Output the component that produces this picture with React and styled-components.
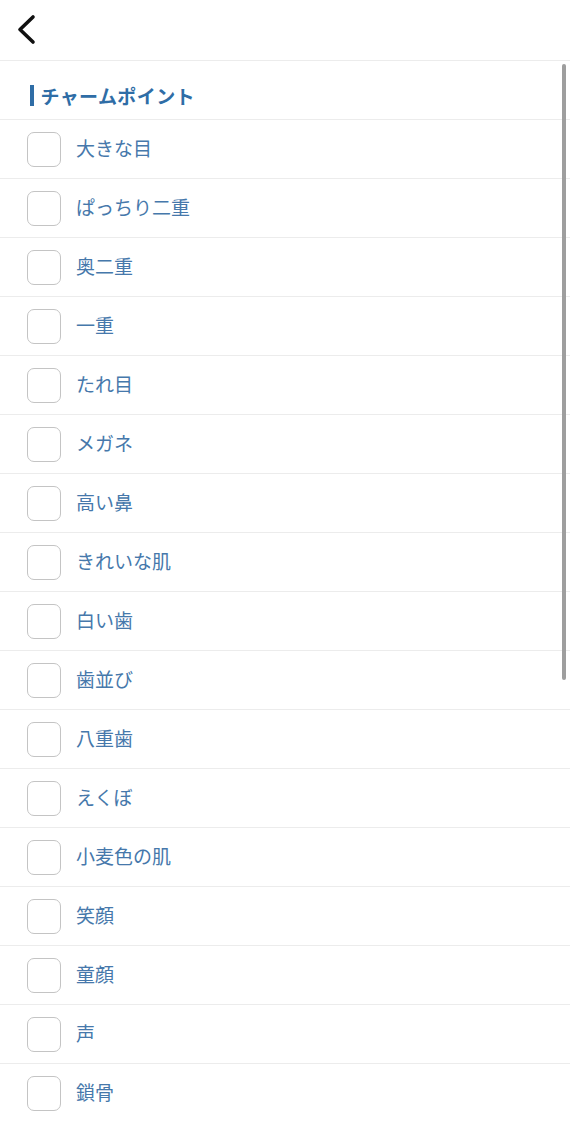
import React from "react";
import styled, { createGlobalStyle } from "styled-components";

const Global = createGlobalStyle`
  html, body { margin: 0; padding: 0; background: #fff; }
  body { font-family: "Noto Sans CJK JP", "Noto Sans", sans-serif; }
`;

const Page = styled.div`
  position: relative;
  width: 570px;
  height: 1122px;
  overflow: hidden;
  background: #fff;
`;

const Header = styled.header`
  height: 61px;
  display: flex;
  align-items: center;
  padding-left: 16px;
  border-bottom: 1px solid #ececec;
  box-sizing: border-box;
`;

const BackButton = styled.button`
  border: none;
  background: none;
  padding: 0;
  width: 22px;
  height: 32px;
  display: flex;
  align-items: center;
  cursor: pointer;
`;

const SectionTitle = styled.div`
  height: 59px;
  box-sizing: border-box;
  border-bottom: 1px solid #ececec;
  display: flex;
  align-items: center;
  padding-left: 30px;
  padding-top: 10px;
  color: #2f6da6;
  font-weight: 700;
  font-size: 19px;
  letter-spacing: 0.4px;
`;

const Bar = styled.span`
  width: 3.5px;
  height: 21px;
  background: #2f6da6;
  margin-right: 7px;
`;

const Row = styled.label`
  height: 59px;
  box-sizing: border-box;
  border-bottom: 1px solid #ececec;
  display: flex;
  align-items: center;
  padding-left: 27px;
  gap: 15px;
`;

const Box = styled.span`
  width: 34px;
  height: 35px;
  box-sizing: border-box;
  border: 1px solid #c4c4c4;
  border-radius: 7px;
  background: #fff;
`;

const Label = styled.span`
  color: #4678ab;
  font-size: 19px;
  line-height: 1;
  margin-bottom: 3px;
`;

const Scrollbar = styled.div`
  position: absolute;
  right: 4px;
  top: 64px;
  width: 4px;
  height: 616px;
  border-radius: 2px;
  background: #9e9e9e;
`;

const items = [
  "大きな目",
  "ぱっちり二重",
  "奥二重",
  "一重",
  "たれ目",
  "メガネ",
  "高い鼻",
  "きれいな肌",
  "白い歯",
  "歯並び",
  "八重歯",
  "えくぼ",
  "小麦色の肌",
  "笑顔",
  "童顔",
  "声",
  "鎖骨",
];

export default function App() {
  return (
    <Page>
      <Global />
      <Header>
        <BackButton aria-label="戻る">
          <svg width="22" height="32" viewBox="0 0 22 32">
            <path d="M17 3 L4 15.5 L17 28" fill="none" stroke="#111" strokeWidth="3.6" strokeLinecap="round" strokeLinejoin="round" />
          </svg>
        </BackButton>
      </Header>
      <SectionTitle>
        <Bar />
        チャームポイント
      </SectionTitle>
      {items.map((t) => (
        <Row key={t}>
          <Box />
          <Label>{t}</Label>
        </Row>
      ))}
      <Scrollbar />
    </Page>
  );
}
